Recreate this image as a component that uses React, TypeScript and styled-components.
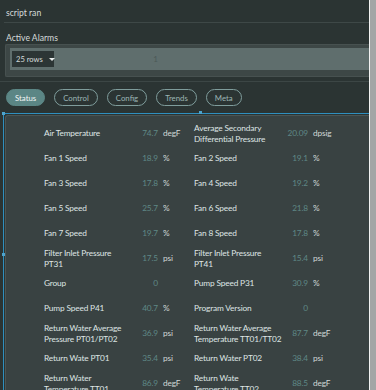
import React from "react";
import styled, { createGlobalStyle } from "styled-components";

const Global = createGlobalStyle`
  html, body { margin: 0; padding: 0; background: #2b3433; overflow: hidden; }
  body { font-family: Lato, "Open Sans", sans-serif; }
`;

const Page = styled.div`
  display: flex;
  width: 376px;
  height: 390px;
  overflow: hidden;
`;

const Main = styled.div`
  flex: 0 0 369px;
  height: 390px;
  overflow: hidden;
`;

const Scrollbar = styled.div`
  flex: 0 0 7px;
  background: #a3a6a6;
  border-left: 1px solid #f2f2f2;
  box-sizing: border-box;
`;

const Header = styled.div`
  height: 23px;
  box-sizing: border-box;
  padding: 4px 0 0 2px;
  margin-left: 4px;
  display: flex;
  align-items: center;
  font-size: 8.6px;
  color: #d6dcdb;
  border-bottom: 1px solid #3e4847;
`;

const SectionTitle = styled.div`
  padding: 9px 0 0 6px;
  line-height: 12px;
  font-size: 8.6px;
  color: #d6dcdb;
`;

const TableBox = styled.div`
  margin: 0 0 0 5px;
  height: 33px;
  background: #3d4746;
  border: 1px solid #475150;
  border-right: none;
  border-radius: 2px 0 0 2px;
  padding: 3px 0 0 4px;
  box-sizing: border-box;
`;

const TableBar = styled.div`
  height: 22px;
  background: #5f6e6d;
  display: flex;
  align-items: center;
  padding-left: 2px;
`;

const RowsSelect = styled.div`
  height: 16px;
  width: 42px;
  flex: 0 0 42px;
  background: #2c3535;
  color: #d6dcdb;
  font-size: 7.6px;
  white-space: nowrap;
  display: flex;
  align-items: center;
  padding-left: 4px;
  gap: 6px;
  box-sizing: border-box;
`;

const Caret = styled.span`
  width: 0;
  height: 0;
  border-left: 3px solid transparent;
  border-right: 3px solid transparent;
  border-top: 3px solid #e8ecec;
`;

const PageNum = styled.div`
  flex: 1;
  text-align: center;
  color: #4c5958;
  font-size: 8px;
  padding-right: 112px;
`;

const Divider = styled.div`
  height: 1px;
  background: #3c4645;
  margin-top: 4px;
`;

const Tabs = styled.div`
  display: flex;
  gap: 9px;
  padding: 7px 0 0 6px;
`;

const Tab = styled.div<{ $active?: boolean }>`
  height: 17px;
  box-sizing: border-box;
  padding: 0 8px;
  border-radius: 9px;
  display: flex;
  align-items: center;
  font-size: 7.8px;
  border: 1px solid ${(p) => (p.$active ? "#5b8685" : "#7f9d9c")};
  background: ${(p) => (p.$active ? "#5b8685" : "transparent")};
  color: ${(p) => (p.$active ? "#f2f6f6" : "#9db6b5")};
`;

const Selection = styled.div`
  position: relative;
  margin: 7px 0 0 3px;
  height: 300px;
  border-top: 1px solid #2f8fbf;
  border-left: 1px solid #2f8fbf;
  padding: 1px 0 0 1px;
`;

const Handle = styled.span<{ $x: number; $y: number }>`
  position: absolute;
  width: 3px;
  height: 3px;
  background: #4da3cc;
  left: ${(p) => p.$x}px;
  top: ${(p) => p.$y}px;
`;

const Panel = styled.div`
  height: 100%;
  background: #394242;
  border: 1px solid #4b5655;
  border-right: none;
  border-bottom: none;
  border-radius: 3px 0 0 0;
  box-sizing: border-box;
  display: grid;
  grid-template-columns: 150px 150px;
  grid-auto-rows: 25px;
  padding: 5px 0 0 38px;
  align-content: start;
`;

const Cell = styled.div`
  display: grid;
  grid-template-columns: 91px 23px 36px;
  align-items: center;
  font-size: 8.3px;
  letter-spacing: -0.15px;
  line-height: 11px;
`;

const Label = styled.div`
  color: #dfe5e4;
  white-space: pre;
`;

const Value = styled.div`
  color: #5f8886;
  text-align: right;
`;

const Unit = styled.div`
  color: #d0d8d7;
  padding-left: 5px;
`;

const rows: [string, string, string][] = [
  ["Air Temperature", "74.7", "degF"],
  ["Average Secondary\nDifferential Pressure", "20.09", "dpsig"],
  ["Fan 1 Speed", "18.9", "%"],
  ["Fan 2 Speed", "19.1", "%"],
  ["Fan 3 Speed", "17.8", "%"],
  ["Fan 4 Speed", "19.2", "%"],
  ["Fan 5 Speed", "25.7", "%"],
  ["Fan 6 Speed", "21.8", "%"],
  ["Fan 7 Speed", "19.7", "%"],
  ["Fan 8 Speed", "17.8", "%"],
  ["Filter Inlet Pressure\nPT31", "17.5", "psi"],
  ["Filter Inlet Pressure\nPT41", "15.4", "psi"],
  ["Group", "0", ""],
  ["Pump Speed P31", "30.9", "%"],
  ["Pump Speed P41", "40.7", "%"],
  ["Program Version", "0", ""],
  ["Return Water Average\nPressure PT01/PT02", "36.9", "psi"],
  ["Return Water Average\nTemperature TT01/TT02", "87.7", "degF"],
  ["Return Wate PT01", "35.4", "psi"],
  ["Return Water PT02", "38.4", "psi"],
  ["Return Water\nTemperature TT01", "86.9", "degF"],
  ["Return Wate\nTemperature TT02", "88.5", "degF"],
];

export default function App() {
  return (
    <>
      <Global />
      <Page>
        <Main>
          <Header>script ran</Header>
          <SectionTitle>Active Alarms</SectionTitle>
          <TableBox>
            <TableBar>
              <RowsSelect>
                25 rows <Caret />
              </RowsSelect>
              <PageNum>1</PageNum>
            </TableBar>
          </TableBox>
          <Divider />
          <Tabs>
            <Tab $active>Status</Tab>
            <Tab>Control</Tab>
            <Tab>Config</Tab>
            <Tab>Trends</Tab>
            <Tab>Meta</Tab>
          </Tabs>
          <Selection>
            <Handle $x={-2} $y={-2} />
            <Handle $x={195} $y={-3} />
            <Handle $x={-2} $y={139} />
            <Panel>
              {rows.map(([l, v, u]) => (
                <Cell key={l}>
                  <Label>{l}</Label>
                  <Value>{v}</Value>
                  <Unit>{u}</Unit>
                </Cell>
              ))}
            </Panel>
          </Selection>
        </Main>
        <Scrollbar />
      </Page>
    </>
  );
}
